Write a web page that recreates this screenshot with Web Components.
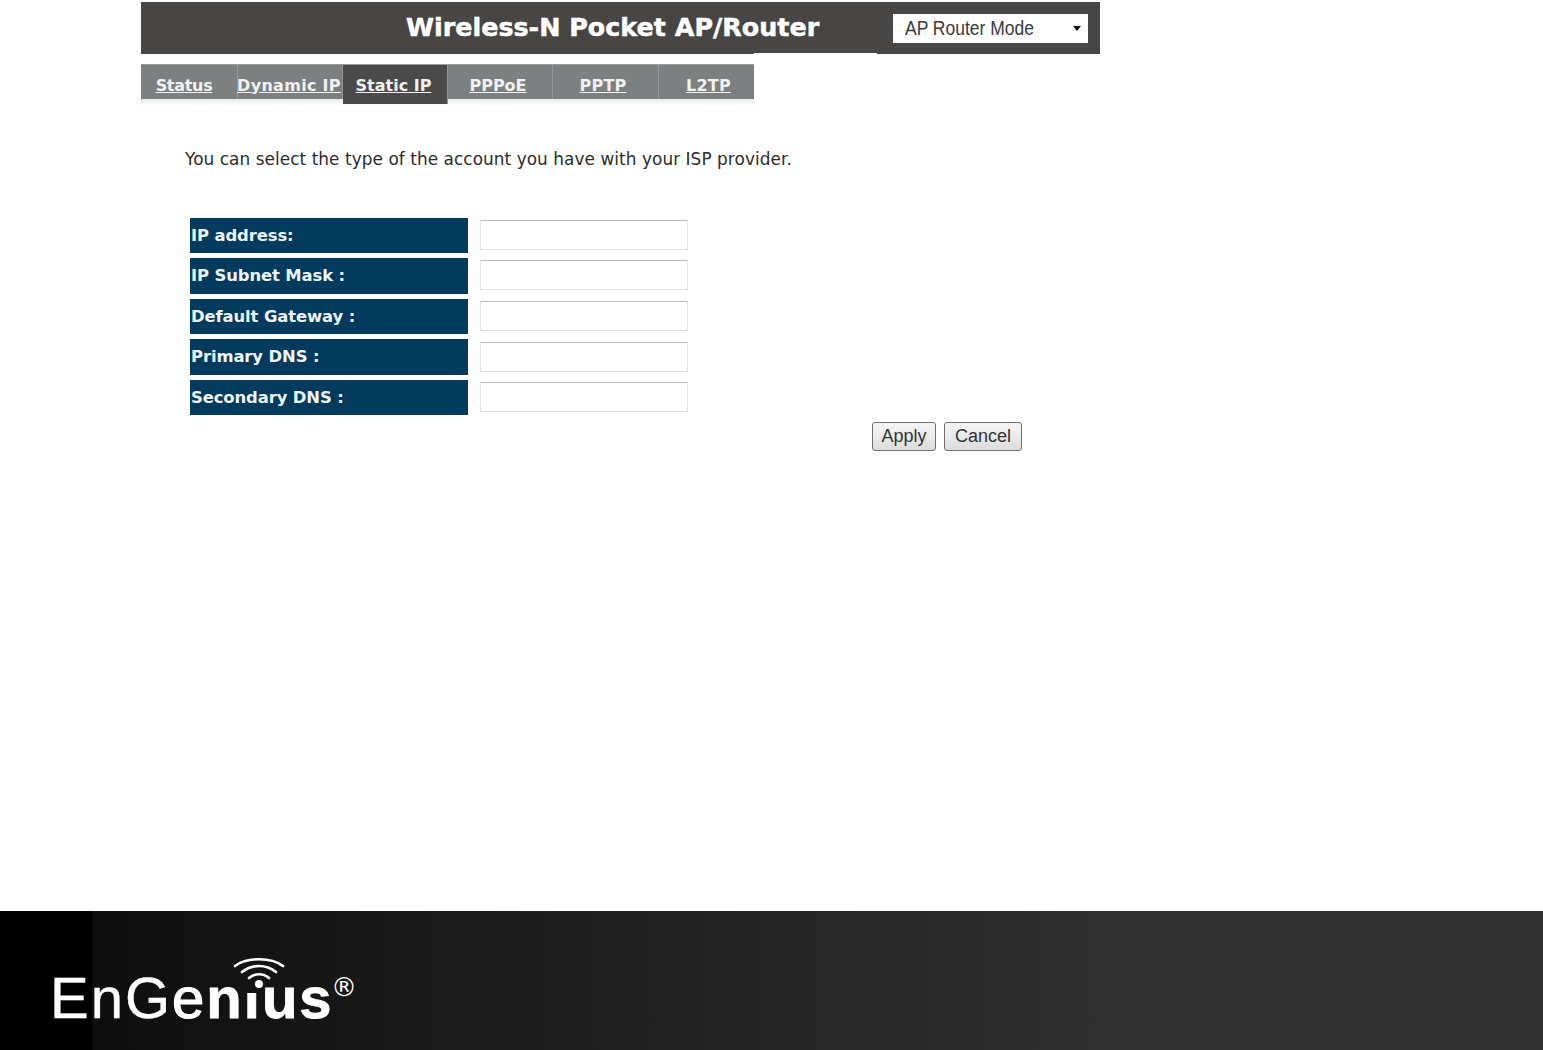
<!DOCTYPE html>
<html>
<head>
<meta charset="utf-8">
<title>Static IP</title>
<style>
  html, body { margin: 0; padding: 0; height: 100%; background: #fff; }
  body { font-family: "DejaVu Sans", sans-serif; }
</style>
</head>
<body>
<router-page>
  <router-header title-text="Wireless-N Pocket AP/Router" mode="AP Router Mode"></router-header>
  <router-tabs tabs="Status,Dynamic IP,Static IP,PPPoE,PPTP,L2TP" active="Static IP"></router-tabs>
  <static-form>
    <form-row label="IP address:"></form-row>
    <form-row label="IP Subnet Mask :"></form-row>
    <form-row label="Default Gateway :"></form-row>
    <form-row label="Primary DNS :"></form-row>
    <form-row label="Secondary DNS :"></form-row>
  </static-form>
  <brand-footer slot="footer"></brand-footer>
</router-page>

<script>
class RouterPage extends HTMLElement {
  constructor () {
    super()
    this.attachShadow({ mode: 'open' }).innerHTML = `
    <style>
    :host{
      display: flex;
      flex-direction: column;
      height: 1050px;
      overflow: hidden;
    }
    main{
      flex: 1;
      padding: 2px 0 0 141px;
      min-height: 0;
    }
    </style>
    <main><slot></slot></main>
    <slot name="footer"></slot>`
  }
}

class RouterHeader extends HTMLElement {
  constructor () {
    super()
    const title = this.getAttribute('title-text')
    const mode = this.getAttribute('mode')
    this.attachShadow({ mode: 'open' }).innerHTML = `
    <style>
    :host{
      display: flex;
      align-items: center;
      width: 959px;
      height: 52px;
      box-sizing: border-box;
      background: #484545;
      padding-left: 265px;
    }
    h1{
      margin: 0 0 3px;
      width: 487px;
      font: bold 25.4px "DejaVu Sans", sans-serif;
      -webkit-text-stroke: .5px #fff;
      color: #fff;
      white-space: nowrap;
    }
    .select{
      width: 195px;
      height: 29px;
      margin-top: 1px;
      background: #fff;
      display: flex;
      align-items: center;
      justify-content: space-between;
      box-sizing: border-box;
      padding: 0 7px 0 12px;
      font: 19.5px "Liberation Sans", sans-serif;
      color: #3a3a3a;
    }
    .select span{
      transform: scaleX(.896);
      transform-origin: left center;
      white-space: nowrap;
    }
    .select i{
      border: 4.5px solid transparent;
      border-top: 5px solid #111;
      border-bottom: 0;
    }
    </style>
    <h1>${title}</h1>
    <div class="select"><span>${mode}</span><i></i></div>`
  }
}

class RouterTabs extends HTMLElement {
  constructor () {
    super()
    const active = this.getAttribute('active')
    // tab width, how far the label sits left of centre, tracking
    const sizes = {
      Status: [97, 10, -0.3],
      'Dynamic IP': [105, 2, 0.3],
      'Static IP': [105, 3, 0],
      PPPoE: [105, 4, 0],
      PPTP: [106, 5, 0.2],
      L2TP: [95, -4, 0.2]
    }
    const tabs = this.getAttribute('tabs').split(',').map(t => {
      const [w, shift, track] = sizes[t]
      const pad = shift < 0 ? `padding-left:${-shift}px` : `padding-right:${shift}px`
      return `<a href="#" class="${t === active ? 'on' : ''}" style="width:${w}px;${pad};letter-spacing:${track}px">${t}</a>`
    }).join('')
    this.attachShadow({ mode: 'open' }).innerHTML = `
    <style>
    :host{
      display: block;
      position: relative;
      width: 613px;
      margin-top: 9.5px;
    }
    nav{
      display: flex;
      height: 34px;
      background: #7c8080;
      border-top: 1px solid #999;
    }
    a{
      display: flex;
      align-items: center;
      justify-content: center;
      box-sizing: border-box;
      height: 34px;
      padding-top: 7px;
      border-right: 1px solid #94989a;
      font: bold 16px "DejaVu Sans", sans-serif;
      color: #f1f1f1;
      text-decoration: underline;
      white-space: nowrap;
    }
    a:last-child{ border-right: 0; }
    a.on{
      height: 39px;
      padding-top: 2px;
      background: #4a4a4b;
    }
    .fade{
      height: 8px;
      background: linear-gradient(#e8eaea, #fff);
    }
    .notch{
      position: absolute;
      left: 613px;
      top: -11px;
      width: 123px;
      height: 1px;
      background: #fff;
    }
    </style>
    <nav>${tabs}</nav>
    <div class="fade"></div>
    <div class="notch"></div>`
  }
}

class StaticForm extends HTMLElement {
  constructor () {
    super()
    this.attachShadow({ mode: 'open' }).innerHTML = `
    <style>
    :host{
      display: block;
      width: 881px;
      box-sizing: border-box;
      padding-left: 49px;
    }
    p{
      margin: 0 0 48px -5px;
      padding-top: 41px;
      font: 16.9px/22px "DejaVu Sans", sans-serif;
      letter-spacing: .06px;
      color: #2c2c2c;
      white-space: nowrap;
    }
    .rows{
      display: grid;
      row-gap: 5px;
    }
    .btns{
      display: flex;
      justify-content: flex-end;
      gap: 8px;
      margin-top: 7px;
    }
    button{
      height: 29px;
      box-sizing: border-box;
      border: 1px solid #6f6f6f;
      border-radius: 3px;
      background: linear-gradient(#f6f6f6, #dcdcdc);
      font: 18px "Liberation Sans", sans-serif;
      color: #333;
      padding: 0;
    }
    .apply{ width: 64px; }
    .cancel{ width: 78px; }
    </style>
    <p>You can select the type of the account you have with your ISP provider.</p>
    <div class="rows"><slot></slot></div>
    <div class="btns"><button class="apply">Apply</button><button class="cancel">Cancel</button></div>`
  }
}

class FormRow extends HTMLElement {
  constructor () {
    super()
    this.attachShadow({ mode: 'open' }).innerHTML = `
    <style>
    :host{
      display: flex;
      align-items: center;
      gap: 12px;
      height: 35.6px;
    }
    label{
      width: 278px;
      height: 100%;
      box-sizing: border-box;
      padding: 0 0 0 1px;
      background: #023b5e;
      color: #eef3f6;
      font: bold 16.4px/36px "DejaVu Sans", sans-serif;
      letter-spacing: -.1px;
      white-space: nowrap;
    }
    input{
      width: 208px;
      height: 30px;
      box-sizing: border-box;
      margin: 0 0 1px;
      background: #fff;
      border: 1px solid #e2e2e2;
      border-top: 1px solid #b8b8b8;
      padding: 0;
    }
    </style>
    <label>${this.getAttribute('label')}</label><input type="text">`
  }
}

class BrandFooter extends HTMLElement {
  constructor () {
    super()
    this.attachShadow({ mode: 'open' }).innerHTML = `
    <style>
    :host{
      display: block;
      flex: none;
      height: 139px;
      background: linear-gradient(90deg, #000 0, #000 92px, #0e0e0e 93px, #1c1c1c 500px, #2f2f2f 1100px, #2f2f2f 100%);
      position: relative;
    }
    .logo{
      position: absolute;
      left: 50px;
      top: 43px;
      width: 310px;
      height: 80px;
      color: #fff;
    }
    .word{
      position: absolute;
      left: 0;
      top: 4px;
      font: 400 58px/80px "Liberation Sans", sans-serif;
      letter-spacing: 2px;
      white-space: nowrap;
      -webkit-text-stroke: .4px #fff;
    }
    .word em{ font-style: normal; -webkit-text-stroke: 1.2px #fff; }
    .word b{ font-weight: 700; letter-spacing: 2px; -webkit-text-stroke: .8px #fff; }
    .word .i{ display: inline-block; clip-path: inset(35px 0 0 0); }
    .word .s{ letter-spacing: 0; }
    sup{
      position: absolute;
      left: 281px;
      top: 20px;
      font: 26px/26px "DejaVu Sans", sans-serif;
    }
    svg{
      position: absolute;
      left: 179px;
      top: 2px;
    }
    </style>
    <div class="logo">
      <span class="word">EnG<em>e</em><b>n<span class="i">i</span>u<span class="s">s</span></b></span><sup>®</sup>
      <svg width="60" height="36" viewBox="0 0 60 36" fill="none" stroke="#fff" stroke-linecap="round">
        <path d="M6 10 C18 1 42 1 54 10" stroke-width="2.6"/>
        <path d="M13 16 C23 8 37 8 47 16" stroke-width="2.6"/>
        <path d="M20 22 C26 17 34 17 40 22" stroke-width="2.6"/>
        <circle cx="30" cy="28" r="4" fill="#fff" stroke="none"/>
      </svg>
    </div>`
  }
}

customElements.define('router-page', RouterPage)
customElements.define('router-header', RouterHeader)
customElements.define('router-tabs', RouterTabs)
customElements.define('static-form', StaticForm)
customElements.define('form-row', FormRow)
customElements.define('brand-footer', BrandFooter)
</script>
</body>
</html>
